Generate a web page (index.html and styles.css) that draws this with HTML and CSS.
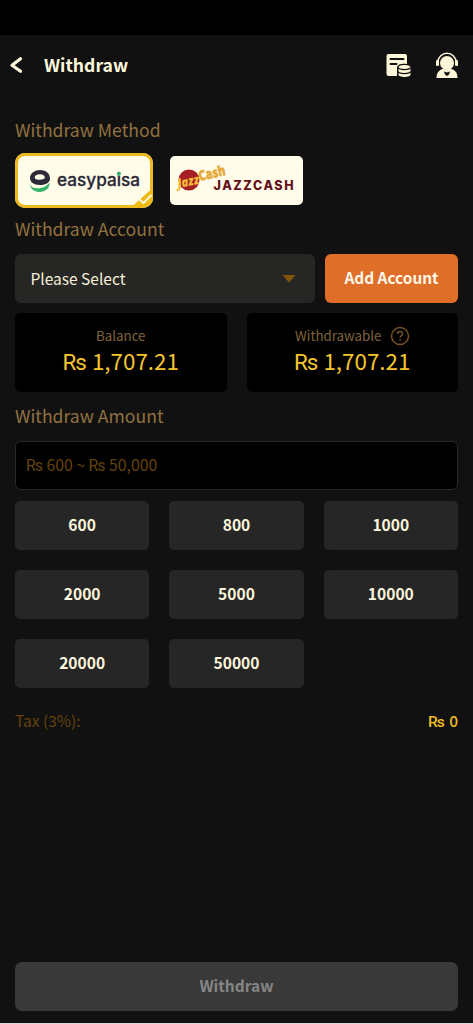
FILE: index.html
```html
<!DOCTYPE html>
<html lang="en">
<head>
<meta charset="utf-8">
<title>Withdraw</title>
<link rel="stylesheet" href="styles.css">
</head>
<body>
<div class="screen">
  <div class="statusbar"></div>
  <header class="header">
    <svg class="back" width="14" height="18" viewBox="0 0 14 18"><path d="M11.500 2.800 3 9.300l8.500 6" fill="none" stroke="#fdf8dc" stroke-width="3.200" stroke-linecap="round" stroke-linejoin="round"/></svg>
    <h1 class="title">Withdraw</h1>
    <svg class="records" width="26" height="24" viewBox="0 0 26 24">
      <path d="M3.500 1H20a2 2 0 0 1 2 2v8c-5-1-9 0-10 3v9H3.500a2 2 0 0 1-2-2V3a2 2 0 0 1 2-2z" fill="#fdf6d8"/>
      <path d="M5.500 6h13M5.500 11h6" stroke="#111" stroke-width="2" stroke-linecap="round"/>
      <path d="M13.500 14.500c0-3.300 12-3.300 12 0v7c0 3.300-12 3.300-12 0z" fill="#fdf6d8"/>
      <path d="M13 14.500c1 2.700 11.500 2.700 12.500 0M13 18.600c1 2.700 11.500 2.700 12.500 0" fill="none" stroke="#111" stroke-width="1.300"/>
    </svg>
    <svg class="support" width="24" height="27" viewBox="0 0 24 27">
      <path d="M2.800 11v-.5a9.200 9.200 0 0 1 18.400 0v.5" fill="none" stroke="#fdf6d8" stroke-width="1.500"/>
      <rect x="1" y="8" width="3" height="6" rx="1.300" fill="#fdf6d8"/>
      <rect x="20" y="8" width="3" height="6" rx="1.300" fill="#fdf6d8"/>
      <circle cx="12" cy="11" r="7" fill="#fdf6d8"/>
      <path d="M1.500 26c0-5 2-7.500 6-9h9c4 1.500 6 4 6 9z" fill="#fdf6d8"/>
      <path d="M9 19.500l3 1 3-1-1 3-2 1.500-2-1.500z" fill="#111"/>
    </svg>
  </header>
  <main class="content">
    <h2 class="label">Withdraw Method</h2>
    <div class="methods">
      <div class="method selected">
        <svg width="138" height="55" viewBox="0 0 138 55">
          <path d="M14.500 31c2 6 15 6 20-1.500.5 6-4.500 9.500-10 9.500-5 0-9-3-10-8z" fill="#36b36b"/>
          <path d="M25 17c6 0 10 3.500 10 8.500 0 4-4 6.500-10 6.500-6.500 0-10-3-10-7s4-8 10-8zm0 4.200c-3.500 0-5.300 1.800-5.300 3.200s2 2.400 5 2.400c3.400 0 5.200-1 5.200-2.500s-2-3.100-4.900-3.100z" fill="#2c2938" fill-rule="evenodd"/>
          <text class="easy" x="42" y="33" textLength="83" lengthAdjust="spacingAndGlyphs">easypaisa</text>
          <circle cx="103.800" cy="21" r="2" fill="#36b36b"/>
          <path d="M117 53.500 136.500 36V46a7.500 7.500 0 0 1-7.500 7.500z" fill="#f0b90e"/>
          <path d="M124.500 46.500l4 3.500 8-8" fill="none" stroke="#fffce9" stroke-width="1.800"/>
        </svg>
      </div>
      <div class="method">
        <svg width="133" height="49" viewBox="0 0 133 49">
          <circle cx="19" cy="24" r="10.500" fill="#a51f24"/>
          <g transform="rotate(-11 8 31)"><text class="jazz" x="8" y="32" textLength="22" lengthAdjust="spacingAndGlyphs">Jazz</text></g>
          <g transform="rotate(-13 30 26)"><text class="cash" x="30" y="25" textLength="27" lengthAdjust="spacingAndGlyphs">Cash</text></g>
          <text class="jazzcash" x="43.500" y="34" textLength="80">JAZZCASH</text>
        </svg>
      </div>
    </div>
    <h2 class="label account-label">Withdraw Account</h2>
    <div class="account">
      <div class="select"><span>Please Select</span><svg width="14" height="9" viewBox="0 0 14 9"><path d="M.5 1h13L7 8.500z" fill="#805709"/></svg></div>
      <button class="add">Add Account</button>
    </div>
    <div class="balances">
      <div class="balance"><div class="caption">Balance</div><div class="value"><span class="rs">Rs</span> 1,707.21</div></div>
      <div class="balance"><div class="caption">Withdrawable<svg width="20" height="20" viewBox="0 0 20 20"><circle cx="10" cy="10" r="8.500" fill="none" stroke="#735228" stroke-width="1.500"/><path d="M7.600 8c0-3.200 5-3.200 5-.3 0 1.900-2.500 1.900-2.500 4" fill="none" stroke="#735228" stroke-width="1.400"/><circle cx="10.100" cy="14" r=".9" fill="#735228"/></svg></div><div class="value"><span class="rs">Rs</span> 1,707.21</div></div>
    </div>
    <h2 class="label">Withdraw Amount</h2>
    <div class="amount"><span class="rs">Rs</span> 600 ~ <span class="rs">Rs</span> 50,000</div>
    <div class="presets">
      <button>600</button><button>800</button><button>1000</button>
      <button>2000</button><button>5000</button><button>10000</button>
      <button>20000</button><button>50000</button>
    </div>
    <div class="tax"><span>Tax (3%):</span><span class="fee"><span class="rs">Rs</span> 0</span></div>
    <button class="submit">Withdraw</button>
  </main>
</div>
</body>
</html>
```
FILE: styles.css
```css
* { box-sizing: border-box; }
body { margin: 0; background: #111; font-family: "Noto Sans CJK SC", "Noto Sans", sans-serif; }
button { border: 0; padding: 0 0 3px; font: inherit; }
svg { display: block; flex: none; }
.screen { height: 1024px; display: flex; flex-direction: column; background: #111; border-bottom: 1px solid #d8d5d6; overflow: hidden; }
.statusbar { height: 35px; background: #000; flex: none; }
.header { height: 60px; flex: none; display: flex; align-items: center; padding: 0 14px 0 9px; }
.title { margin: 0 auto 0 21px; font-size: 17.6px; line-height: 28px; font-weight: 700; color: #fdf8dc; }
.support { margin-left: 24px; }
.content { flex: 1; display: flex; flex-direction: column; padding: 21px 15px 12px; }
.label { margin: 0; height: 28px; line-height: 28px; font-size: 17.6px; font-weight: 400; color: #91713f; }
.methods { display: flex; align-items: center; gap: 17px; height: 55px; margin: 9px 0 7px; }
.method { width: 133px; height: 49px; border-radius: 5px; background: #fffce9; overflow: hidden; }
.method.selected { width: 138px; height: 55px; border-radius: 10px; background: #fffce9; box-shadow: inset 0 0 0 3px #eeb91f; }
.easy { font: 500 17px Inter, sans-serif; fill: #2c2938; stroke: #2c2938; stroke-width: .3px; }
.jazz { font: italic 800 13px "Open Sans", sans-serif; fill: #f5bd38; }
.cash { font: 800 14px "Open Sans", sans-serif; fill: #e6a936; stroke: #e6a936; stroke-width: .4px; }
.jazzcash { font: 800 12.5px Inter, sans-serif; fill: #641018; }
.account { display: flex; gap: 10px; height: 49px; margin-top: 11px; }
.select { flex: 1; display: flex; align-items: center; justify-content: space-between; padding: 0 19px 0 15.5px; border-radius: 6px; background: #262625; color: #f5efd8; font-size: 15.5px; }
.select span { padding-bottom: 1px; }
.add { width: 133px; border-radius: 6px; background: #df6e29; color: #fff8e8; font-size: 15.4px; font-weight: 700; }
.balances { display: grid; grid-template-columns: 1fr 1fr; gap: 20px; height: 79px; margin: 10px 0; }
.balance { padding-top: 11px; border-radius: 5px; background: #000; text-align: center; }
.caption { display: flex; align-items: center; justify-content: center; gap: 9px; height: 22px; font-size: 13.3px; color: #80643a; }
.caption svg { margin: 1px -1px 0 0; }
.value { height: 30px; line-height: 28px; font-size: 22.4px; color: #f6c52e; }
.rs { font-family: Roboto, sans-serif; letter-spacing: -1px; margin-right: 1px; }
.amount { height: 49px; line-height: 46px; margin-top: 11px; padding-left: 10px; border: 1px solid #2a2a2a; border-radius: 6px; background: #000; color: #65430b; font-size: 15.8px; flex: none; }
.presets { display: grid; grid-template-columns: repeat(3, 1fr); grid-auto-rows: 49px; gap: 20px; margin-top: 11px; }
.presets button { border-radius: 5px; background: #262626; color: #fbf5dc; font-size: 15.6px; font-weight: 700; }
.tax { display: flex; justify-content: space-between; height: 28px; line-height: 28px; margin-top: 18px; font-size: 15.5px; color: #65430b; }
.fee { color: #f0bd25; font-weight: 500; }
.fee .rs { margin-right: 2px; }
.submit { height: 49px; margin-top: auto; border-radius: 7px; background: #393939; color: #858585; font-size: 15.5px; font-weight: 700; }
```
